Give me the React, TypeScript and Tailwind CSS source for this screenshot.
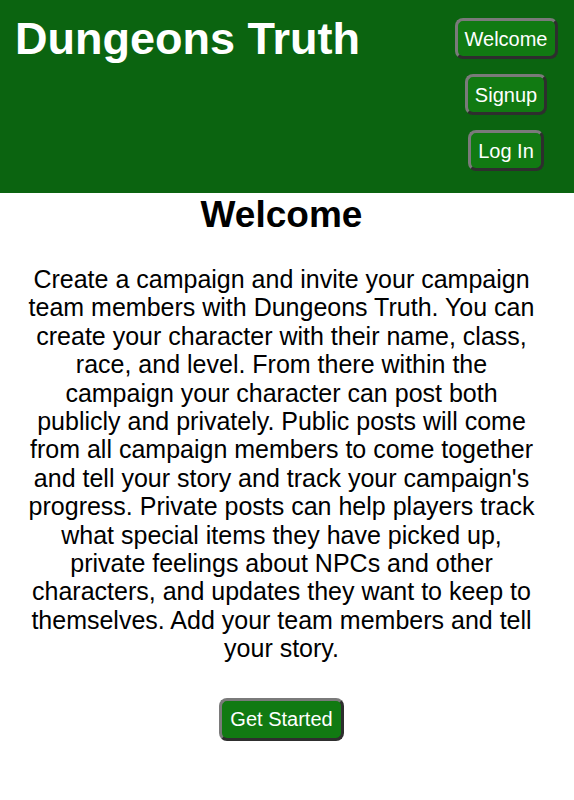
export default function App() {
  const btn =
    "h-[41px] rounded-[8px] border-[3px] border-t-[#7a7a7a] border-l-[#7a7a7a] border-b-[#2e2e2e] border-r-[#2e2e2e] bg-[#117a12] px-[7px] text-[20px] leading-none text-white"

  return (
    <div className="min-h-screen bg-white font-['Liberation_Sans',Arial,sans-serif] text-black">
      {/* Header */}
      <header className="flex justify-between bg-[#0b6410] pb-[22px] pl-[15px] pr-[16px] pt-[18px]">
        <h1 className="-mt-[4px] text-[45px] font-bold leading-[50px] text-white">Dungeons Truth</h1>
        <nav className="flex w-[104px] flex-col items-center gap-[15px]">
          <button className={btn}>Welcome</button>
          <button className={btn}>Signup</button>
          <button className={btn}>Log In</button>
        </nav>
      </header>

      {/* Main content */}
      <main className="ml-[21px] flex w-[521px] flex-col items-center text-center">
        <h2 className="mt-[2px] text-[37px] font-bold leading-[40px]">Welcome</h2>
        <p className="mt-[30px] text-[25px] leading-[28.4px]">
          Create a campaign and invite your campaign team members with Dungeons Truth. You can create
          your character with their name, class, race, and level. From there within the campaign your
          character can post both publicly and privately. Public posts will come from all campaign
          members to come together and tell your story and track your campaign's progress. Private
          posts can help players track what special items they have picked up, private feelings about
          NPCs and other characters, and updates they want to keep to themselves. Add your team members
          and tell your story.
        </p>
        <button className="mt-[35px] h-[43px] rounded-[8px] border-[3px] border-t-[#7a7a7a] border-l-[#7a7a7a] border-b-[#2e2e2e] border-r-[#2e2e2e] bg-[#117a12] px-[8px] text-[20px] leading-none text-white">
          Get Started
        </button>
      </main>
    </div>
  )
}
